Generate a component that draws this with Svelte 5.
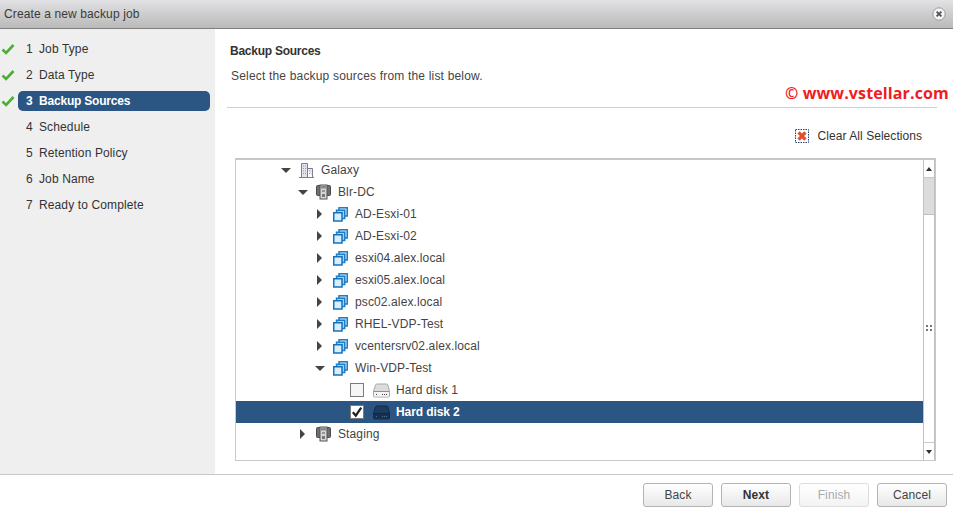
<script lang="ts">
	const steps = [
		{ n: 1, label: 'Job Type', done: true },
		{ n: 2, label: 'Data Type', done: true },
		{ n: 3, label: 'Backup Sources', done: true, active: true },
		{ n: 4, label: 'Schedule' },
		{ n: 5, label: 'Retention Policy' },
		{ n: 6, label: 'Job Name' },
		{ n: 7, label: 'Ready to Complete' }
	];

	const rows = [
		{ level: 0, kind: 'dc', label: 'Galaxy', open: true },
		{ level: 1, kind: 'cluster', label: 'Blr-DC', open: true },
		{ level: 2, kind: 'vm', label: 'AD-Esxi-01' },
		{ level: 2, kind: 'vm', label: 'AD-Esxi-02' },
		{ level: 2, kind: 'vm', label: 'esxi04.alex.local' },
		{ level: 2, kind: 'vm', label: 'esxi05.alex.local' },
		{ level: 2, kind: 'vm', label: 'psc02.alex.local' },
		{ level: 2, kind: 'vm', label: 'RHEL-VDP-Test' },
		{ level: 2, kind: 'vm', label: 'vcentersrv02.alex.local' },
		{ level: 2, kind: 'vm', label: 'Win-VDP-Test', open: true },
		{ level: 3, kind: 'disk', label: 'Hard disk 1' },
		{ level: 3, kind: 'disk', label: 'Hard disk 2', checked: true },
		{ level: 1, kind: 'cluster', label: 'Staging' }
	];
</script>

<div class="dialog">
	<header class="titlebar">
		<span>Create a new backup job</span>
		<button class="close" aria-label="Close">
			<svg width="14" height="14" viewBox="0 0 14 14">
				<circle cx="7" cy="7" r="6.2" fill="#f4f4f4" stroke="#9a9a9a" />
				<path d="M4.6 4.6l4.8 4.8M9.4 4.6l-4.8 4.8" stroke="#555" stroke-width="1.9" />
			</svg>
		</button>
	</header>

	<div class="body">
		<nav class="sidebar">
			{#each steps as step}
				<div class="step">
					<span class="tick">
						{#if step.done}
							<svg width="14" height="12" viewBox="0 0 14 12">
								<path d="M1.5 6.5l3.6 3.4L12.5 2" fill="none" stroke="#4cae33" stroke-width="2.6" />
							</svg>
						{/if}
					</span>
					<div class="pill" class:active={step.active}>
						<span class="num">{step.n}</span>
						<span>{step.label}</span>
					</div>
				</div>
			{/each}
		</nav>

		<main class="content">
			<h2>Backup Sources</h2>
			<p>Select the backup sources from the list below.</p>
			<div class="watermark">© www.vstellar.com</div>
			<hr />
			<div class="actions">
				<svg width="14" height="14" viewBox="0 0 14 14">
					<rect x="0.5" y="0.5" width="13" height="13" fill="#fff" stroke="#1d3f7a" stroke-dasharray="1.5 1" />
					<path d="M3.6 3.4l6.8 7.2M10.4 3.4l-6.8 7.2" stroke="#e2502a" stroke-width="3.2" />
				</svg>
				<span>Clear All Selections</span>
			</div>

			<div class="tree">
				<div class="rows">
					{#each rows as row}
						<div class="row" class:selected={row.checked} style="padding-left: {row.level * 17}px">
							{#if row.kind === 'disk'}
								<span class="check" class:on={row.checked}>
									{#if row.checked}
										<svg width="12" height="12" viewBox="0 0 12 12">
											<path d="M1.8 6.2l3 3.4L10.2 1.6" fill="none" stroke="#222" stroke-width="2.2" />
										</svg>
									{/if}
								</span>
								<svg class="ico disk" width="17" height="15" viewBox="0 0 17 15">
									<path
										d="M4 1h9.5q1 0 1.4 1L16.5 8v5q0 1-1 1h-14q-1 0-1-1V8L2.6 2q.4-1 1.4-1z"
										fill={row.checked ? '#1c3b5e' : '#dcdcdc'}
										stroke={row.checked ? '#142c47' : '#a8a8a8'}
									/>
									<path d="M1 8.5h15" stroke={row.checked ? '#12263c' : '#8f8f8f'} />
									<rect x="1" y="9" width="15" height="4.5" fill={row.checked ? '#16304e' : '#f4f4f4'} />
									<path d="M3 11.5h2M9 11.5h6" stroke={row.checked ? '#4f7397' : '#444'} stroke-dasharray="1 1" />
								</svg>
							{:else}
								<span class="arrow" class:open={row.open}></span>
								{#if row.kind === 'dc'}
									<svg class="ico" width="15" height="16" viewBox="0 0 15 16">
										<path d="M2.5 15V1.5h6V15M8.5 6.5h5V15" fill="#e4e2ec" stroke="#7f7a96" />
										<path d="M0 15.5h15" stroke="#7f7a96" />
										<path d="M4 4h3M4 6.5h3M4 9h3M4 11.5h3M10 9h2M10 11.5h2" stroke="#9a97aa" stroke-dasharray="1 1" />
									</svg>
								{:else if row.kind === 'cluster'}
									<svg class="ico" width="15" height="16" viewBox="0 0 15 16">
										<rect x="0.5" y="1.5" width="14" height="10" rx="1" fill="#6f6f6f" stroke="#4a4a4a" />
										<rect x="4" y="1" width="7" height="14" fill="#d6d6d6" stroke="#555" />
										<rect x="4.5" y="1.5" width="6" height="3" fill="#8a8a8a" />
										<path d="M6 7h3" stroke="#555" />
										<rect x="6" y="10" width="3" height="3" fill="#777" />
									</svg>
								{:else}
									<svg class="ico" width="15" height="15" viewBox="0 0 15 15">
										<rect x="6" y="0.75" width="8.25" height="8.25" fill="#cfe8fa" stroke="#1e7fc8" stroke-width="1.5" />
										<rect x="3.5" y="3.25" width="8.25" height="8.25" fill="#9fd2f3" stroke="#1e7fc8" stroke-width="1.5" />
										<rect x="0.75" y="5.75" width="8.25" height="8.25" fill="#d9eefc" stroke="#1473bd" stroke-width="1.5" />
									</svg>
								{/if}
							{/if}
							<span class="label">{row.label}</span>
						</div>
					{/each}
				</div>
				<div class="scrollbar">
					<div class="sb-btn"><span class="up"></span></div>
					<div class="sb-track">
						<div class="sb-thumb"></div>
						<div class="sb-grip"></div>
					</div>
					<div class="sb-btn"><span class="down"></span></div>
				</div>
			</div>
		</main>
	</div>

	<footer class="footer">
		<button>Back</button>
		<button class="next">Next</button>
		<button disabled>Finish</button>
		<button>Cancel</button>
	</footer>
</div>

<style>
	:global(body) {
		margin: 0;
		background: #fff;
	}

	.dialog {
		width: 953px;
		height: 514px;
		display: flex;
		flex-direction: column;
		font-family: 'Liberation Sans', Arial, sans-serif;
		font-size: 12px;
		letter-spacing: 0.12px;
		color: #333;
		overflow: hidden;
	}

	.titlebar {
		height: 28px;
		flex: none;
		display: flex;
		align-items: center;
		justify-content: space-between;
		padding: 0 7px 0 4px;
		background: linear-gradient(#e2e2e4, #b9b9b9);
		border-bottom: 1px solid #7f7f7f;
		color: #3a3a3a;
	}

	.close {
		border: none;
		background: none;
		padding: 0;
		width: 14px;
		height: 14px;
		display: flex;
	}

	.body {
		height: 445px;
		flex: none;
		display: flex;
	}

	.sidebar {
		width: 215px;
		flex: none;
		background: #efefef;
		padding-top: 7px;
		box-sizing: border-box;
	}

	.step {
		height: 26px;
		display: flex;
		align-items: center;
		color: #333;
	}

	.tick {
		width: 18px;
		flex: none;
		padding-left: 1px;
		box-sizing: border-box;
		display: flex;
	}

	.pill {
		width: 192px;
		height: 20px;
		box-sizing: border-box;
		padding-left: 8px;
		display: flex;
		align-items: center;
		border-radius: 5px;
	}

	.pill.active {
		background: #2b5582;
		color: #fff;
		font-weight: 700;
		letter-spacing: -0.2px;
	}

	.num {
		width: 13px;
		flex: none;
	}

	.content {
		flex: 1;
		position: relative;
		padding: 15px 18px 0 12px;
		display: flex;
		flex-direction: column;
		min-width: 0;
	}

	h2 {
		margin: 0 0 0 3px;
		font-size: 12px;
		line-height: 14px;
		font-weight: 700;
		letter-spacing: -0.25px;
		color: #333;
	}

	p {
		margin: 11px 0 0 4px;
		line-height: 14px;
		letter-spacing: 0.18px;
		color: #444;
	}

	.watermark {
		position: absolute;
		left: 570px;
		top: 53px;
		font-family: 'Open Sans', sans-serif;
		font-weight: 700;
		font-size: 16px;
		line-height: 22px;
		letter-spacing: 0.12px;
		color: #f01c24;
		white-space: nowrap;
	}

	hr {
		border: none;
		border-top: 1px solid #cfcfcf;
		margin: 24px 0 0 0;
		width: 710px;
	}

	.actions {
		display: flex;
		align-items: center;
		justify-content: flex-end;
		gap: 9px;
		height: 14px;
		margin-top: 21px;
		padding-right: 13px;
		letter-spacing: 0.05px;
		color: #333;
	}

	.tree {
		margin: 15px 0 0 8px;
		width: 701px;
		height: 303px;
		box-sizing: border-box;
		border: 1px solid #c8c8c8;
		border-top-width: 2px;
		display: flex;
	}

	.rows {
		flex: 1;
		margin-top: -1px;
		min-width: 0;
	}

	.row {
		height: 22px;
		display: flex;
		align-items: center;
		box-sizing: border-box;
		color: #444;
	}

	.row.selected {
		background: #2b5582;
		color: #fff;
		font-weight: 700;
		letter-spacing: -0.1px;
	}

	.arrow {
		width: 0;
		height: 0;
		margin-left: 47px;
		margin-right: 11px;
		border-style: solid;
		border-width: 5px 0 5px 5px;
		border-color: transparent transparent transparent #444;
	}

	.arrow.open {
		margin-left: 45px;
		margin-right: 8px;
		border-width: 5px 5px 0 5px;
		border-color: #444 transparent transparent transparent;
	}

	.ico {
		flex: none;
	}

	.label {
		margin-left: 7px;
		white-space: nowrap;
	}

	.check {
		margin-left: 63px;
		margin-right: 9px;
		width: 14px;
		height: 14px;
		box-sizing: border-box;
		border: 1px solid #7b7b7b;
		background: #f6f6f6;
		display: flex;
		align-items: center;
		justify-content: center;
		flex: none;
	}

	.check.on {
		background: #fff;
	}

	.disk + .label {
		margin-left: 6px;
	}

	.scrollbar {
		width: 12px;
		box-sizing: border-box;
		flex: none;
		display: flex;
		flex-direction: column;
		border-left: 1px solid #c0c0c0;
		border-right: 1px solid #c0c0c0;
	}

	.sb-btn {
		height: 17px;
		background: #fff;
		display: flex;
		align-items: center;
		justify-content: center;
		flex: none;
	}

	.up {
		border-style: solid;
		border-width: 0 3px 4px 3px;
		border-color: transparent transparent #333 transparent;
	}

	.down {
		border-style: solid;
		border-width: 4px 3px 0 3px;
		border-color: #333 transparent transparent transparent;
	}

	.sb-track {
		flex: 1;
		background: #fff;
		position: relative;
		border-top: 1px solid #c8c8c8;
		border-bottom: 1px solid #c8c8c8;
	}

	.sb-thumb {
		height: 36px;
		background: #dcdcdc;
		border-bottom: 1px solid #c0c0c0;
	}

	.sb-grip {
		position: absolute;
		left: 2px;
		top: 147px;
		width: 6px;
		height: 6px;
		background:
			linear-gradient(#777, #777) 0 0 / 2px 2px no-repeat,
			linear-gradient(#777, #777) 4px 0 / 2px 2px no-repeat,
			linear-gradient(#777, #777) 0 4px / 2px 2px no-repeat,
			linear-gradient(#777, #777) 4px 4px / 2px 2px no-repeat;
	}

	.footer {
		flex: 1;
		border-top: 1px solid #c8c8c8;
		display: flex;
		justify-content: flex-end;
		gap: 8px;
		padding: 8px 6px 0 0;
	}

	button {
		font-family: inherit;
		font-size: 12px;
		letter-spacing: 0.1px;
	}

	.footer button {
		width: 70px;
		height: 24px;
		border: 1px solid #b3b3b3;
		border-radius: 3px;
		background: linear-gradient(#fff, #e8e8e8);
		color: #444;
		padding: 0;
	}

	.footer .next {
		font-weight: 700;
		color: #333;
	}

	.footer button:disabled {
		border-color: #ddd;
		color: #aaa;
		background: linear-gradient(#fff, #f3f3f3);
	}
</style>
